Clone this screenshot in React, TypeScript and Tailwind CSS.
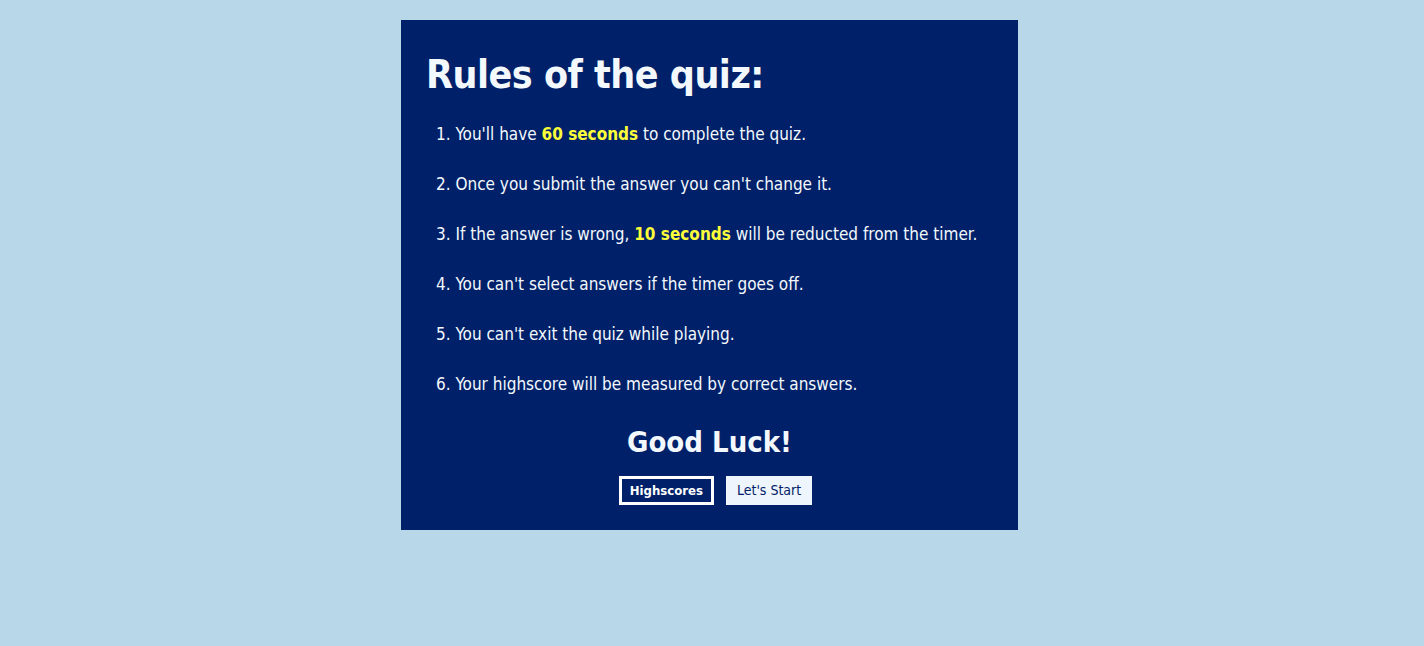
import React from 'react';

const rules: React.ReactNode[] = [
  <>You'll have <b className="text-[#fdfd3a]">60 seconds</b> to complete the quiz.</>,
  <>Once you submit the answer you can't change it.</>,
  <>If the answer is wrong, <b className="text-[#fdfd3a]">10 seconds</b> will be reducted from the timer.</>,
  <>You can't select answers if the timer goes off.</>,
  <>You can't exit the quiz while playing.</>,
  <>Your highscore will be measured by correct answers.</>,
];

const App = () => {
  return (
    <div className="min-h-[646px] bg-[#b8d8ea] pt-5 pr-[5px] font-['DejaVu_Sans_Condensed','DejaVu_Sans',sans-serif]">
      <div className="mx-auto w-[617px] h-[510px] bg-[#002169] text-[#f3f8fd] px-[25px] pt-[30px]">
        <h1 className="text-[39px] font-bold leading-[50px] tracking-[-0.5px]">Rules of the quiz:</h1>
        <ol className="mt-[24px] pl-[10px] flex flex-col gap-[30px] text-[17px] leading-[20px]">
          {rules.map((rule, i) => (
            <li key={i}>{i + 1}. {rule}</li>
          ))}
        </ol>
        <h2 className="mt-[30px] text-center text-[29px] font-bold leading-[36px]">Good Luck!</h2>
        <div className="mt-[16px] pl-[12px] flex justify-center gap-3">
          <button className="h-[29px] px-[8px] border-[3px] border-white text-white text-[13px] font-bold">Highscores</button>
          <button className="h-[29px] px-[11px] bg-[#eef5fc] text-[#002169] text-[14px]">Let's Start</button>
        </div>
      </div>
    </div>
  );
};

export default App;
